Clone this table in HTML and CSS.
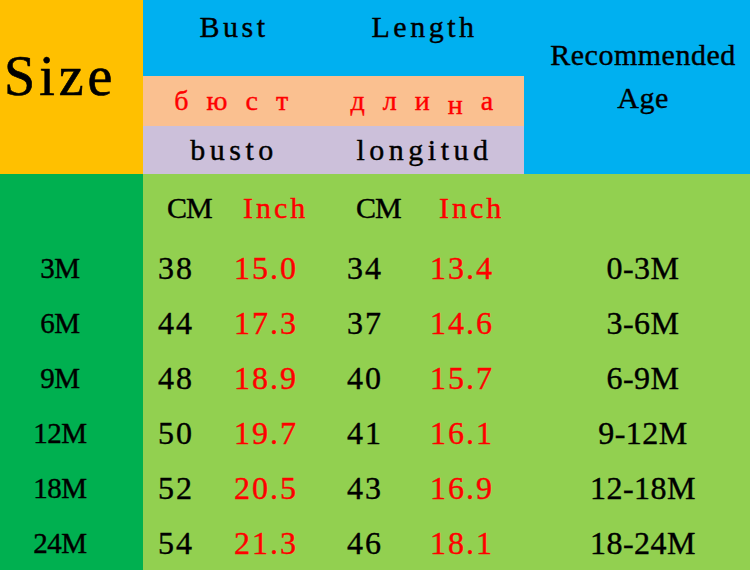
FILE: index.html
```html
<!DOCTYPE html>
<html lang="en">
<head>
<meta charset="utf-8">
<title>Size chart</title>
<link rel="stylesheet" href="styles.css">
</head>
<body>
<div class="sheet">
  <div class="size-cell">Size</div>
  <div class="head">
    <div class="measures">
      <div class="mrow en"><span>Bust</span><span>Length</span></div>
      <div class="mrow ru"><span>б ю с т</span><span>д л и <span class="drop">н</span> а</span></div>
      <div class="mrow es"><span>busto</span><span>longitud</span></div>
    </div>
    <div class="age-head">Recommended<br>Age</div>
  </div>
  <div class="sizes">
    <div></div>
    <div>3M</div>
    <div>6M</div>
    <div>9M</div>
    <div>12M</div>
    <div>18M</div>
    <div>24M</div>
  </div>
  <div class="data">
    <div class="hd">CM</div><div class="hd red">Inch</div><div class="hd">CM</div><div class="hd red">Inch</div><div></div>
    <div>38</div><div class="red">15.0</div><div>34</div><div class="red">13.4</div><div class="age">0-3M</div>
    <div>44</div><div class="red">17.3</div><div>37</div><div class="red">14.6</div><div class="age">3-6M</div>
    <div>48</div><div class="red">18.9</div><div>40</div><div class="red">15.7</div><div class="age">6-9M</div>
    <div>50</div><div class="red">19.7</div><div>41</div><div class="red">16.1</div><div class="age">9-12M</div>
    <div>52</div><div class="red">20.5</div><div>43</div><div class="red">16.9</div><div class="age">12-18M</div>
    <div>54</div><div class="red">21.3</div><div>46</div><div class="red">18.1</div><div class="age">18-24M</div>
  </div>
</div>
</body>
</html>
```
FILE: styles.css
```css
html, body {
  margin: 0;
  padding: 0;
  overflow: hidden;
}
body {
  font-family: "Liberation Serif", "Times New Roman", serif;
  color: #000;
  background: #92d050;
  -webkit-text-stroke: 0.4px currentColor;
}
.sheet {
  width: 750px;
  height: 570px;
  display: grid;
  grid-template-columns: 143px 607px;
  grid-template-rows: 174px 396px;
  overflow: hidden;
}
.size-cell {
  background: #ffc000;
  font-size: 56px;
  line-height: 56px;
  letter-spacing: 4px;
  padding: 48px 0 0 4px;
  box-sizing: border-box;
  -webkit-text-stroke: 0.6px currentColor;
}
.head {
  display: grid;
  grid-template-columns: 381px 226px;
  background: #00b0f0;
}
.measures {
  display: flex;
  flex-direction: column;
}
.mrow {
  display: grid;
  grid-template-columns: 182px 199px;
  text-align: center;
}
.mrow.en {
  height: 76px;
  box-sizing: border-box;
  padding-top: 12px;
  font-size: 30px;
  line-height: 30px;
  letter-spacing: 3.5px;
}
.mrow.ru {
  height: 50px;
  background: #fac090;
  color: #ff0000;
  font-size: 28px;
  line-height: 50px;
  letter-spacing: 5.5px;
}
.drop {
  position: relative;
  top: 4px;
}
.mrow.es {
  height: 48px;
  background: #ccc0da;
  font-size: 30px;
  line-height: 48px;
  letter-spacing: 4.5px;
}
.age-head {
  text-align: center;
  font-size: 30px;
  line-height: 43px;
  letter-spacing: 0.5px;
  padding: 33px 0 0 12px;
}
.sizes {
  background: #00b050;
  display: grid;
  grid-template-rows: 67px repeat(6, 55px);
  font-size: 29px;
  line-height: 55px;
  text-align: center;
  letter-spacing: -0.5px;
  padding-right: 23px;
}
.data {
  background: #92d050;
  display: grid;
  grid-template-columns: 76px 113px 83px 94px 226px;
  grid-template-rows: 67px repeat(6, 55px);
  padding-left: 15px;
  font-size: 32px;
  line-height: 55px;
  letter-spacing: 2px;
}
.data .hd {
  font-size: 30px;
  line-height: 67px;
  padding-left: 9px;
  letter-spacing: 3px;
}
.data .hd:first-child,
.data .hd:nth-child(3) {
  letter-spacing: -1px;
}
.red {
  color: #ff0000;
}
.age {
  text-align: center;
  padding-left: 12px;
  letter-spacing: 0.5px;
}
```
